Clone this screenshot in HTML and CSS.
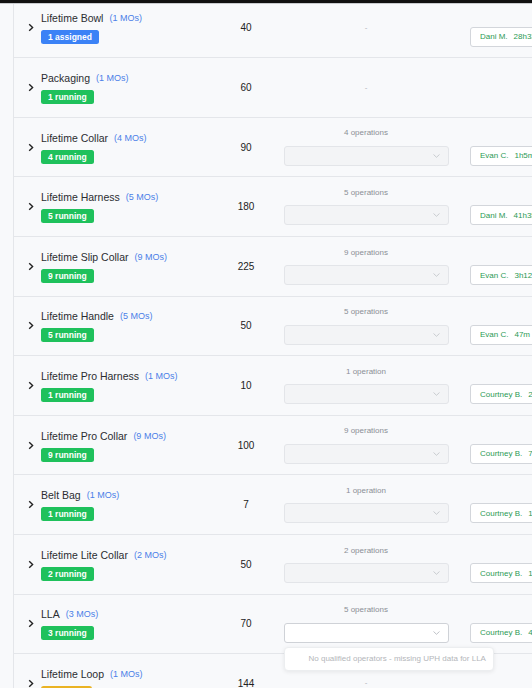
FILE: index.html
```html
<!DOCTYPE html>
<html>
<head>
<meta charset="utf-8">
<link rel="stylesheet" href="styles.css">
</head>
<body>
<div class="topbar"></div>
<div class="page">
  <div class="side"></div>
  <div class="list">

    <div class="row">
      <div class="chev"><svg width="6" height="9" viewBox="0 0 6 9"><path d="M1.2 1.2L4.6 4.5L1.2 7.8" fill="none" stroke="#222" stroke-width="1.4"/></svg></div>
      <div class="name"><div class="title">Lifetime Bowl<span class="mos">(1 MOs)</span></div><span class="badge blue">1 assigned</span></div>
      <div class="qty">40</div>
      <div class="ops"><span class="dash">-</span></div>
      <div class="opr"><div class="olabel"></div><div class="obox"><span>Dani M.</span><span class="time">28h33m</span></div></div>
    </div>

    <div class="row">
      <div class="chev"><svg width="6" height="9" viewBox="0 0 6 9"><path d="M1.2 1.2L4.6 4.5L1.2 7.8" fill="none" stroke="#222" stroke-width="1.4"/></svg></div>
      <div class="name"><div class="title">Packaging<span class="mos">(1 MOs)</span></div><span class="badge green">1 running</span></div>
      <div class="qty">60</div>
      <div class="ops"><span class="dash">-</span></div>
      <div class="opr"></div>
    </div>

    <div class="row">
      <div class="chev"><svg width="6" height="9" viewBox="0 0 6 9"><path d="M1.2 1.2L4.6 4.5L1.2 7.8" fill="none" stroke="#222" stroke-width="1.4"/></svg></div>
      <div class="name"><div class="title">Lifetime Collar<span class="mos">(4 MOs)</span></div><span class="badge green">4 running</span></div>
      <div class="qty">90</div>
      <div class="ops"><div class="olabel">4 operations</div><div class="select"><svg width="7" height="4" viewBox="0 0 7 4"><path d="M0.5 0.5L3.5 3.3L6.5 0.5" fill="none" stroke="#c4c7cc" stroke-width="0.9"/></svg></div></div>
      <div class="opr"><div class="olabel right">4 of 4</div><div class="obox"><span>Evan C.</span><span class="time">1h5m</span></div></div>
    </div>

    <div class="row">
      <div class="chev"><svg width="6" height="9" viewBox="0 0 6 9"><path d="M1.2 1.2L4.6 4.5L1.2 7.8" fill="none" stroke="#222" stroke-width="1.4"/></svg></div>
      <div class="name"><div class="title">Lifetime Harness<span class="mos">(5 MOs)</span></div><span class="badge green">5 running</span></div>
      <div class="qty">180</div>
      <div class="ops"><div class="olabel">5 operations</div><div class="select"><svg width="7" height="4" viewBox="0 0 7 4"><path d="M0.5 0.5L3.5 3.3L6.5 0.5" fill="none" stroke="#c4c7cc" stroke-width="0.9"/></svg></div></div>
      <div class="opr"><div class="olabel right">5 of 5</div><div class="obox"><span>Dani M.</span><span class="time">41h35m</span></div></div>
    </div>

    <div class="row">
      <div class="chev"><svg width="6" height="9" viewBox="0 0 6 9"><path d="M1.2 1.2L4.6 4.5L1.2 7.8" fill="none" stroke="#222" stroke-width="1.4"/></svg></div>
      <div class="name"><div class="title">Lifetime Slip Collar<span class="mos">(9 MOs)</span></div><span class="badge green">9 running</span></div>
      <div class="qty">225</div>
      <div class="ops"><div class="olabel">9 operations</div><div class="select"><svg width="7" height="4" viewBox="0 0 7 4"><path d="M0.5 0.5L3.5 3.3L6.5 0.5" fill="none" stroke="#c4c7cc" stroke-width="0.9"/></svg></div></div>
      <div class="opr"><div class="olabel right">1 of 9</div><div class="obox"><span>Evan C.</span><span class="time">3h12m</span></div></div>
    </div>

    <div class="row">
      <div class="chev"><svg width="6" height="9" viewBox="0 0 6 9"><path d="M1.2 1.2L4.6 4.5L1.2 7.8" fill="none" stroke="#222" stroke-width="1.4"/></svg></div>
      <div class="name"><div class="title">Lifetime Handle<span class="mos">(5 MOs)</span></div><span class="badge green">5 running</span></div>
      <div class="qty">50</div>
      <div class="ops"><div class="olabel">5 operations</div><div class="select"><svg width="7" height="4" viewBox="0 0 7 4"><path d="M0.5 0.5L3.5 3.3L6.5 0.5" fill="none" stroke="#c4c7cc" stroke-width="0.9"/></svg></div></div>
      <div class="opr"><div class="olabel right">1 of 5</div><div class="obox"><span>Evan C.</span><span class="time">47m +</span></div></div>
    </div>

    <div class="row">
      <div class="chev"><svg width="6" height="9" viewBox="0 0 6 9"><path d="M1.2 1.2L4.6 4.5L1.2 7.8" fill="none" stroke="#222" stroke-width="1.4"/></svg></div>
      <div class="name"><div class="title">Lifetime Pro Harness<span class="mos">(1 MOs)</span></div><span class="badge green">1 running</span></div>
      <div class="qty">10</div>
      <div class="ops"><div class="olabel">1 operation</div><div class="select"><svg width="7" height="4" viewBox="0 0 7 4"><path d="M0.5 0.5L3.5 3.3L6.5 0.5" fill="none" stroke="#c4c7cc" stroke-width="0.9"/></svg></div></div>
      <div class="opr"><div class="olabel right"></div><div class="obox"><span>Courtney B.</span><span class="time">27m</span></div></div>
    </div>

    <div class="row">
      <div class="chev"><svg width="6" height="9" viewBox="0 0 6 9"><path d="M1.2 1.2L4.6 4.5L1.2 7.8" fill="none" stroke="#222" stroke-width="1.4"/></svg></div>
      <div class="name"><div class="title">Lifetime Pro Collar<span class="mos">(9 MOs)</span></div><span class="badge green">9 running</span></div>
      <div class="qty">100</div>
      <div class="ops"><div class="olabel">9 operations</div><div class="select"><svg width="7" height="4" viewBox="0 0 7 4"><path d="M0.5 0.5L3.5 3.3L6.5 0.5" fill="none" stroke="#c4c7cc" stroke-width="0.9"/></svg></div></div>
      <div class="opr"><div class="olabel right">5 of 9</div><div class="obox"><span>Courtney B.</span><span class="time">7h</span></div></div>
    </div>

    <div class="row">
      <div class="chev"><svg width="6" height="9" viewBox="0 0 6 9"><path d="M1.2 1.2L4.6 4.5L1.2 7.8" fill="none" stroke="#222" stroke-width="1.4"/></svg></div>
      <div class="name"><div class="title">Belt Bag<span class="mos">(1 MOs)</span></div><span class="badge green">1 running</span></div>
      <div class="qty">7</div>
      <div class="ops"><div class="olabel">1 operation</div><div class="select"><svg width="7" height="4" viewBox="0 0 7 4"><path d="M0.5 0.5L3.5 3.3L6.5 0.5" fill="none" stroke="#c4c7cc" stroke-width="0.9"/></svg></div></div>
      <div class="opr"><div class="olabel right">3 of 1</div><div class="obox"><span>Courtney B.</span><span class="time">1d</span></div></div>
    </div>

    <div class="row">
      <div class="chev"><svg width="6" height="9" viewBox="0 0 6 9"><path d="M1.2 1.2L4.6 4.5L1.2 7.8" fill="none" stroke="#222" stroke-width="1.4"/></svg></div>
      <div class="name"><div class="title">Lifetime Lite Collar<span class="mos">(2 MOs)</span></div><span class="badge green">2 running</span></div>
      <div class="qty">50</div>
      <div class="ops"><div class="olabel">2 operations</div><div class="select"><svg width="7" height="4" viewBox="0 0 7 4"><path d="M0.5 0.5L3.5 3.3L6.5 0.5" fill="none" stroke="#c4c7cc" stroke-width="0.9"/></svg></div></div>
      <div class="opr"><div class="olabel right">3 of 2</div><div class="obox"><span>Courtney B.</span><span class="time">1h</span></div></div>
    </div>

    <div class="row">
      <div class="chev"><svg width="6" height="9" viewBox="0 0 6 9"><path d="M1.2 1.2L4.6 4.5L1.2 7.8" fill="none" stroke="#222" stroke-width="1.4"/></svg></div>
      <div class="name"><div class="title">LLA<span class="mos">(3 MOs)</span></div><span class="badge green">3 running</span></div>
      <div class="qty">70</div>
      <div class="ops"><div class="olabel">5 operations</div>
        <div class="select open"><svg width="7" height="4" viewBox="0 0 7 4"><path d="M0.5 0.5L3.5 3.3L6.5 0.5" fill="none" stroke="#b9bcc2" stroke-width="0.9"/></svg>
          <div class="menu">No qualified operators - missing UPH data for LLA</div>
        </div>
      </div>
      <div class="opr"><div class="olabel right">3 of 5</div><div class="obox"><span>Courtney B.</span><span class="time">4h</span></div></div>
    </div>

    <div class="row">
      <div class="chev"><svg width="6" height="9" viewBox="0 0 6 9"><path d="M1.2 1.2L4.6 4.5L1.2 7.8" fill="none" stroke="#222" stroke-width="1.4"/></svg></div>
      <div class="name"><div class="title">Lifetime Loop<span class="mos">(1 MOs)</span></div><span class="badge yellow">1 paused</span></div>
      <div class="qty">144</div>
      <div class="ops"><span class="dash">-</span></div>
      <div class="opr"></div>
    </div>

  </div>
</div>
</body>
</html>
```
FILE: styles.css
```css
html, body {
  margin: 0;
  padding: 0;
  width: 532px;
  height: 688px;
  overflow: hidden;
  background: #f8f9fb;
  font-family: "Liberation Sans", Arial, sans-serif;
}
.topbar {
  position: absolute;
  top: 0;
  left: 0;
  right: 0;
  height: 3px;
  background: #111;
  border-bottom: 1px solid #c9cbcf;
  z-index: 5;
}
.page {
  display: flex;
  height: 688px;
}
.side {
  width: 13px;
  flex: none;
  border-right: 1px solid #e4e6ea;
  background: #f8f9fb;
}
.list {
  flex: 1;
  margin-top: -1.4px;
  min-width: 0;
}
.row {
  display: grid;
  grid-template-columns: 27px 175px 60px 180px 170px;
  height: 59.6px;
  box-sizing: border-box;
  border-bottom: 1px solid #e4e6ea;
  align-items: center;
}
.chev {
  padding-left: 14px;
  display: flex;
  align-items: center;
}
.chev svg { display: block; }
.name {
  display: flex;
  flex-direction: column;
  align-items: flex-start;
}
.title {
  font-size: 10.5px;
  line-height: 14px;
  color: #2b2d31;
  margin-bottom: 4px;
  white-space: nowrap;
}
.mos {
  font-size: 9px;
  color: #4b7fe8;
  margin-left: 6px;
  position: relative;
  top: -1px;
}
.badge {
  display: inline-block;
  height: 14px;
  line-height: 14px;
  padding: 0 7px;
  border-radius: 2.5px;
  font-size: 8.5px;
  font-weight: bold;
  color: #fff;
  white-space: nowrap;
}
.badge.blue { background: #3b82f6; }
.badge.green { background: #1fc15c; }
.badge.yellow { background: #eab324; }
.qty {
  text-align: center;
  font-size: 10px;
  color: #222;
}
.ops {
  display: flex;
  flex-direction: column;
  align-items: center;
  justify-content: center;
}
.dash {
  font-size: 8px;
  color: #b0b3b8;
  line-height: 10px;
}
.olabel {
  font-size: 8px;
  line-height: 10px;
  height: 10px;
  color: #8b8f96;
  margin-bottom: 7.5px;
  white-space: nowrap;
}
.olabel.right {
  padding-left: 74px;
}
.select {
  position: relative;
  width: 165px;
  height: 20px;
  box-sizing: border-box;
  border: 1px solid #e3e5e9;
  border-radius: 3px;
  background: #f3f4f6;
  display: flex;
  align-items: center;
  justify-content: flex-end;
  padding-right: 8px;
}
.select svg { display: block; }
.select.open {
  background: #fff;
  border-color: #cfd2d7;
}
.menu {
  position: absolute;
  top: 23.5px;
  left: -1px;
  width: 210px;
  height: 24px;
  box-sizing: border-box;
  background: #fff;
  border: 1px solid #eceef0;
  border-radius: 4px;
  box-shadow: 0 1px 4px rgba(0, 0, 0, 0.08);
  font-size: 8px;
  line-height: 22px;
  color: #b4b6ba;
  padding-left: 24px;
  white-space: nowrap;
  z-index: 3;
}
.opr {
  padding-left: 14px;
  display: flex;
  flex-direction: column;
  justify-content: center;
  align-self: stretch;
  overflow: hidden;
}
.opr .olabel { margin-bottom: 7.5px; }
.obox {
  width: 150px;
  height: 20px;
  box-sizing: border-box;
  border: 1px solid #d3d6db;
  border-radius: 3px;
  background: #fff;
  display: flex;
  align-items: center;
  padding-left: 9px;
  font-size: 8px;
  color: #2c9a55;
  white-space: nowrap;
}
.obox .time { margin-left: 6px; }
.opr:empty { }
```
